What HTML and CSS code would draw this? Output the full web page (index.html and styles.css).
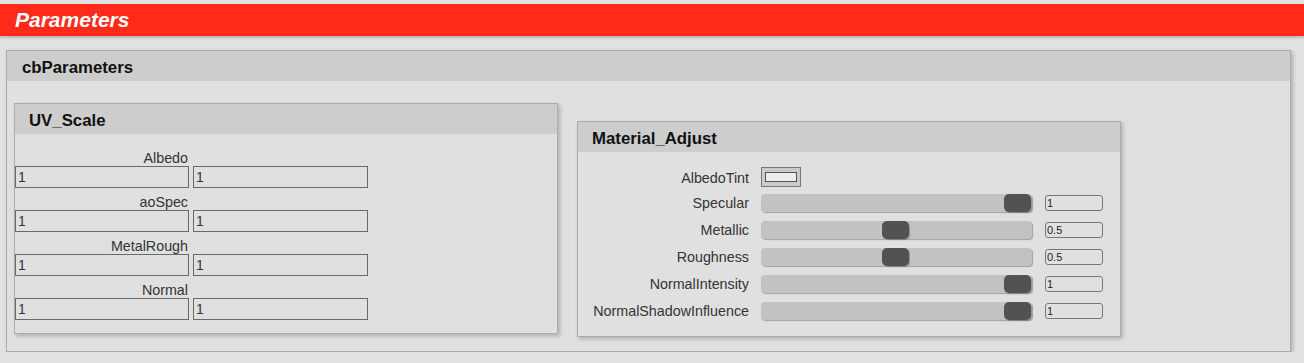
FILE: index.html
```html
<!DOCTYPE html>
<html>
<head>
<meta charset="utf-8">
<title>Parameters</title>
<link rel="stylesheet" href="styles.css">
</head>
<body>
<div class="titlebar">Parameters</div>
<div class="panel outer">
  <div class="panel-head">cbParameters</div>
  <div class="outer-body">
    <div class="panel sub uv">
      <div class="panel-head">UV_Scale</div>
      <div class="uv-body">
        <div class="uv-row">
          <div class="uv-label">Albedo</div>
          <input class="uv-input" type="text" value="1">
          <input class="uv-input" type="text" value="1">
        </div>
        <div class="uv-row">
          <div class="uv-label">aoSpec</div>
          <input class="uv-input" type="text" value="1">
          <input class="uv-input" type="text" value="1">
        </div>
        <div class="uv-row">
          <div class="uv-label">MetalRough</div>
          <input class="uv-input" type="text" value="1">
          <input class="uv-input" type="text" value="1">
        </div>
        <div class="uv-row">
          <div class="uv-label">Normal</div>
          <input class="uv-input" type="text" value="1">
          <input class="uv-input" type="text" value="1">
        </div>
      </div>
    </div>
    <div class="panel sub mat">
      <div class="panel-head">Material_Adjust</div>
      <div class="mat-body">
        <div class="mat-label tint-label">AlbedoTint</div>
        <div class="swatch"><div class="swatch-inner"></div></div>
        <div></div>

        <div class="mat-label">Specular</div>
        <div class="track"><div class="thumb" style="margin-left:243px"></div></div>
        <input class="num" type="text" value="1">

        <div class="mat-label">Metallic</div>
        <div class="track"><div class="thumb" style="margin-left:121px"></div></div>
        <input class="num" type="text" value="0.5">

        <div class="mat-label">Roughness</div>
        <div class="track"><div class="thumb" style="margin-left:121px"></div></div>
        <input class="num" type="text" value="0.5">

        <div class="mat-label">NormalIntensity</div>
        <div class="track"><div class="thumb" style="margin-left:243px"></div></div>
        <input class="num" type="text" value="1">

        <div class="mat-label">NormalShadowInfluence</div>
        <div class="track"><div class="thumb" style="margin-left:243px"></div></div>
        <input class="num" type="text" value="1">
      </div>
    </div>
  </div>
</div>
</body>
</html>
```
FILE: styles.css
```css
* {
  box-sizing: border-box;
}

body {
  margin: 0;
  background: #e1e1e1;
  font-family: "Liberation Sans", Arial, sans-serif;
  color: #333;
}

.titlebar {
  margin-top: 4px;
  height: 32px;
  line-height: 32px;
  padding-left: 15px;
  background: #ff2a1a;
  color: #fff;
  font-size: 21px;
  font-weight: bold;
  font-style: italic;
  box-shadow: 0 2px 2px rgba(0, 0, 0, 0.18);
}

.panel {
  border: 1px solid #ababab;
  background: #e0e0e0;
  box-shadow: 2px 2px 4px rgba(0, 0, 0, 0.22);
}

.panel-head {
  height: 30px;
  padding: 4px 15px 0;
  line-height: 26px;
  background: #cdcdcd;
  color: #111;
  font-size: 16.8px;
  font-weight: bold;
}

.outer {
  margin: 14px 0 0 6px;
  width: 1285px;
  height: 302px;
}

.outer-body {
  display: flex;
  align-items: flex-start;
  padding: 0 0 0 7px;
}

.sub {
  width: 544px;
}

.uv {
  margin-top: 22px;
}

.mat {
  margin-top: 40px;
  margin-left: 19px;
}

.sub .panel-head {
  padding-left: 14px;
}

.uv-body {
  padding: 16px 0 7px;
}

.uv-row {
  display: grid;
  grid-template-columns: 174px 175px;
  column-gap: 4px;
  margin-bottom: 6px;
}

.uv-label {
  grid-column: 1;
  text-align: right;
  padding-right: 1px;
  font-size: 14.3px;
  line-height: 16px;
  height: 16px;
}

.uv-input {
  grid-row: 2;
  height: 22px;
  margin: 0;
  padding: 0 2px;
  border: 1px solid #6a6a6a;
  border-radius: 0;
  background: #e0e0e0;
  color: #333;
  font-family: "Liberation Sans", Arial, sans-serif;
  font-size: 14px;
  outline: none;
}

.mat-body {
  display: grid;
  grid-template-columns: 157px 271px 58px;
  grid-auto-rows: 27px;
  column-gap: 12px;
  padding: 15px 16px 7px 14px;
}

.mat-body > :nth-child(3n) {
  margin-left: 1px;
}

.mat-label {
  text-align: right;
  font-size: 14.3px;
  line-height: 18px;
  white-space: nowrap;
}

.tint-label {
  line-height: 20px;
  padding-top: 1px;
}

.swatch {
  width: 40px;
  height: 20px;
  border: 1px solid #777;
  background: #cbcbcb;
  padding: 4px 0 0 3px;
}

.swatch-inner {
  width: 32px;
  height: 10px;
  border: 1px solid #555;
  background: #ececec;
}

.track {
  display: flex;
  height: 18px;
  border-radius: 4px;
  background: #c2c2c2;
  box-shadow: 1px 1px 1px rgba(0, 0, 0, 0.28);
}

.thumb {
  width: 27px;
  height: 18px;
  border-radius: 5px;
  background: #525252;
  box-shadow: 1px 1px 1px rgba(0, 0, 0, 0.25);
}

.num {
  width: 58px;
  height: 16px;
  margin: 1px 0 0;
  padding: 0 1px;
  border: 1px solid #777;
  border-radius: 3px;
  background: #e0e0e0;
  color: #222;
  font-family: "Liberation Sans", Arial, sans-serif;
  font-size: 11px;
  outline: none;
}
```
